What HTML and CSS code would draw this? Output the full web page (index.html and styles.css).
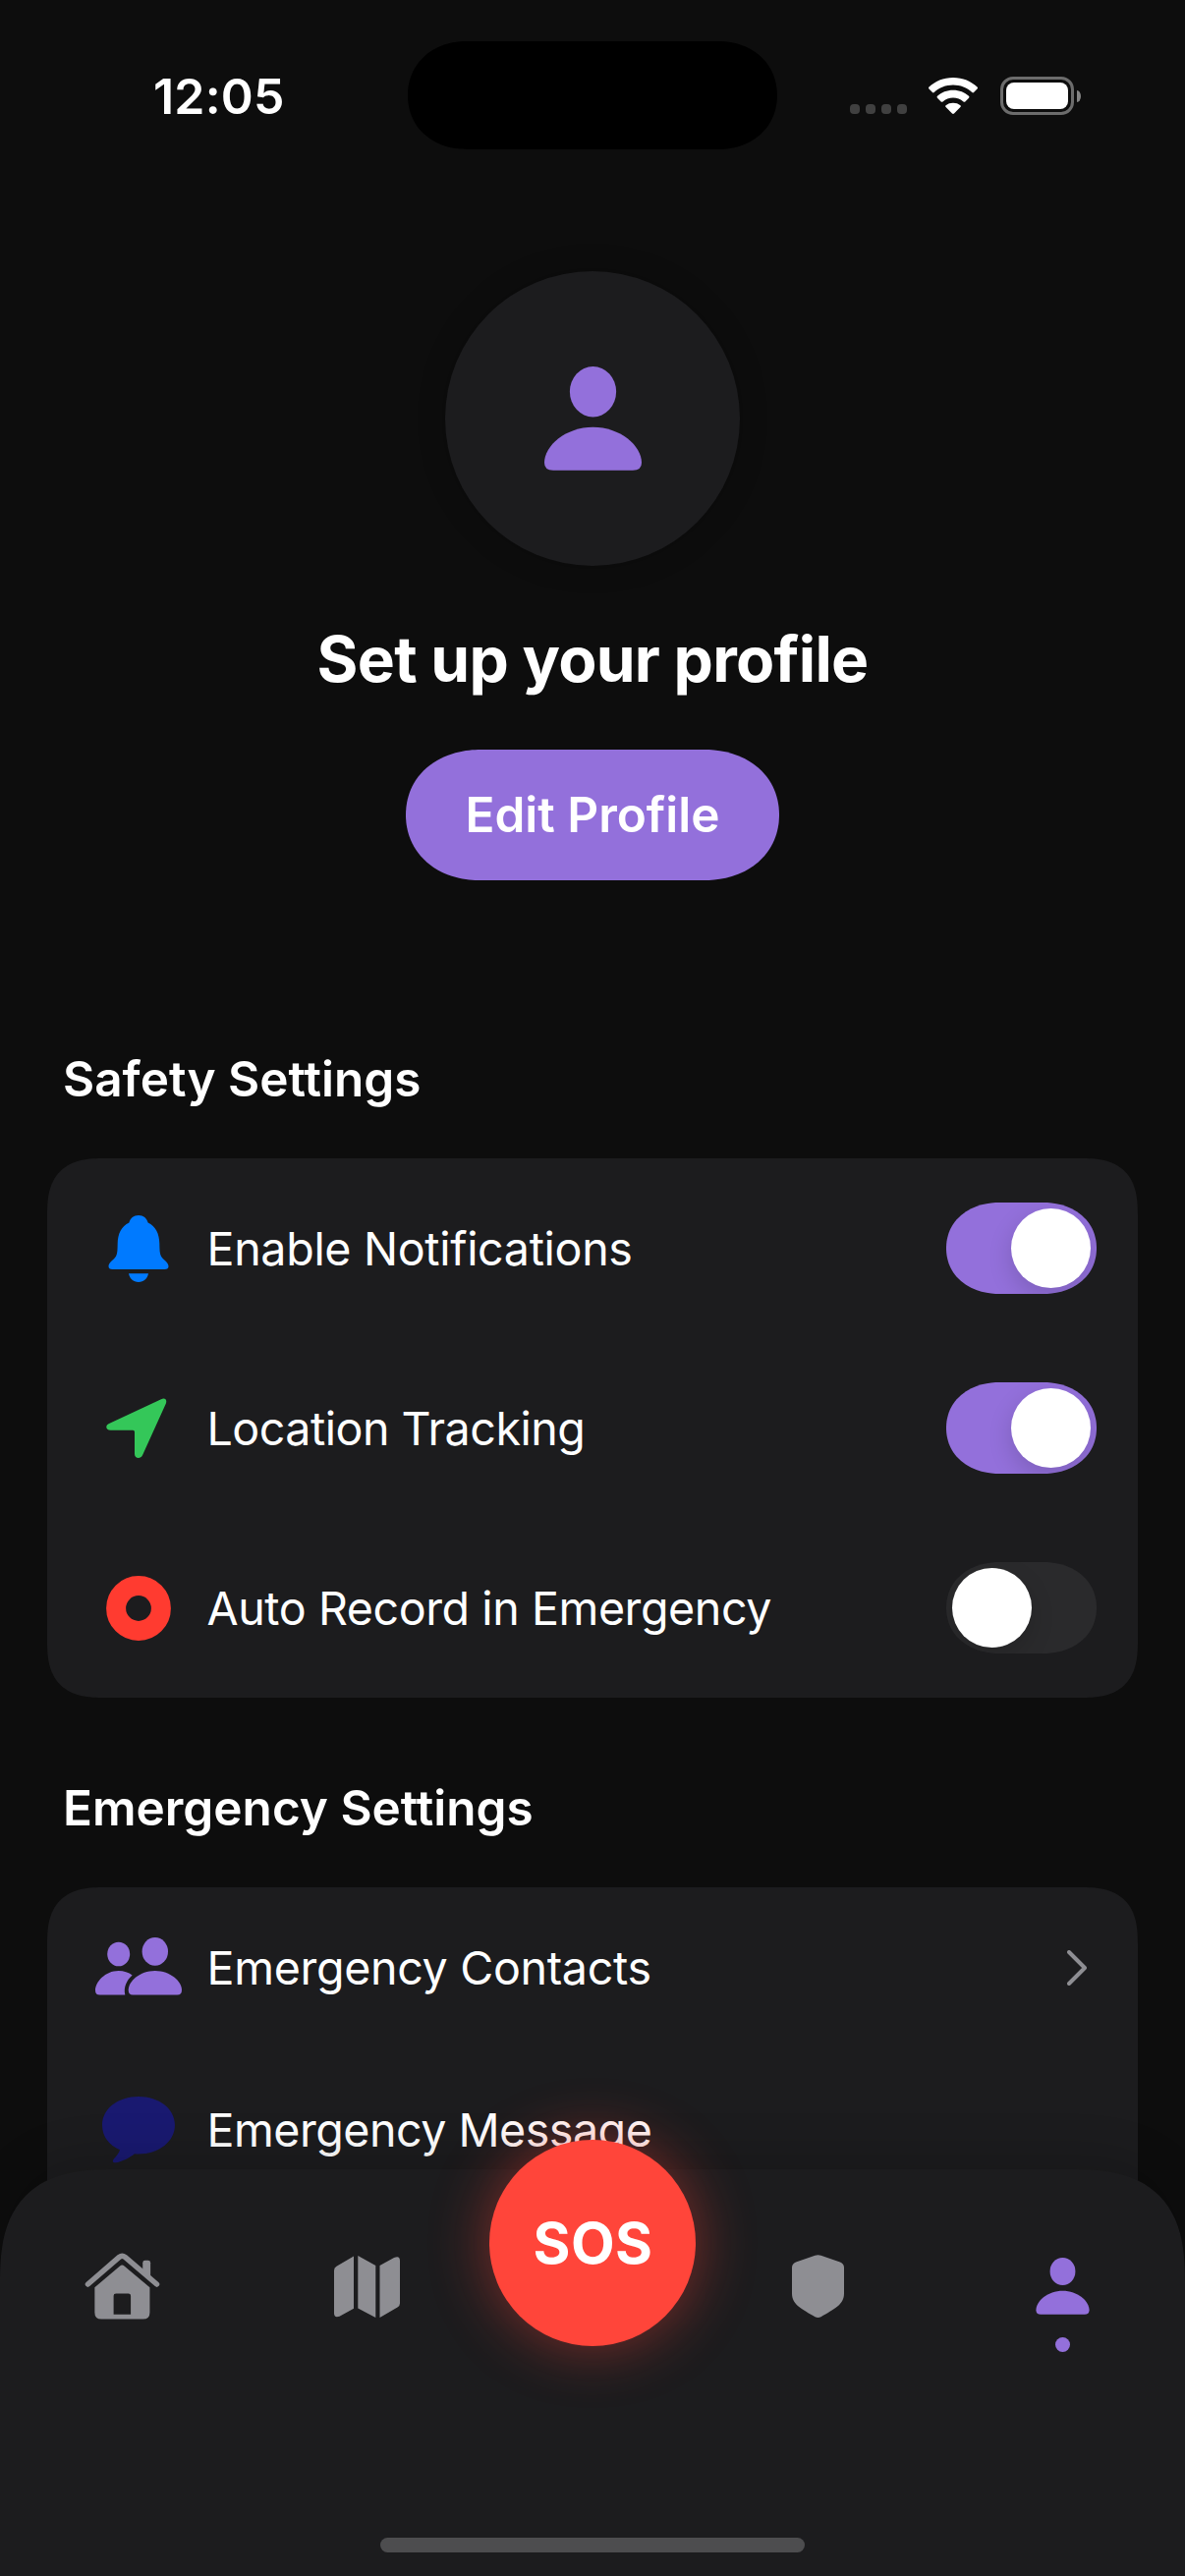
FILE: index.html
```html
<!DOCTYPE html>
<html lang="en">
<head>
<meta charset="utf-8">
<title>Profile</title>
<link rel="stylesheet" href="styles.css">
</head>
<body>
<div class="screen">
  <header class="status">
    <div class="time">12:05</div>
    <div class="island"></div>
    <div class="indicators">
      <div class="signal"><i></i><i></i><i></i><i></i></div>
      <svg class="wifi" width="50" height="37" viewBox="0 0 50 37"><path d="M25 0C34.8 0 43.600 3.800 49.500 9.600Q50.500 10.600 49.500 11.600L46 15.100Q45.200 15.900 44.300 15.100C39.200 10.300 32.400 7.600 25 7.600S10.800 10.300 5.700 15.100Q4.800 15.900 4 15.100L.5 11.600Q-.5 10.600.5 9.600C6.400 3.800 15.200 0 25 0Z"/><path d="M25 12.700C31.300 12.700 36.800 15 41 18.700Q42 19.700 41 20.700L37.300 24.400Q36.400 25.200 35.500 24.400C32.700 21.900 29 20.400 25 20.400S17.300 21.900 14.500 24.400Q13.600 25.200 12.700 24.400L9 20.700Q8 19.700 9 18.700C13.200 15 18.700 12.700 25 12.700Z"/><path d="M25 25.700C27.900 25.700 30.300 26.500 32.400 28.200Q33.300 29 32.400 30L26 36.600Q25 37.400 24 36.600L17.600 30Q16.700 29 17.600 28.200C19.700 26.500 22.100 25.700 25 25.700Z"/></svg>
      <div class="battery"><div class="shell"><div class="charge"></div></div><div class="cap"></div></div>
    </div>
  </header>

  <main>
    <section class="profile">
      <div class="avatar">
        <svg width="99" height="106" viewBox="0 0 99 106"><ellipse cx="49.500" cy="25.700" rx="23.600" ry="25.700"/><path d="M49.500 61.700C77 61.700 99 80.500 99 98Q99 105.700 90 105.700H9Q0 105.700 0 98C0 80.500 22 61.700 49.500 61.700Z"/></svg>
      </div>
      <h1>Set up your profile</h1>
      <button class="edit">Edit Profile</button>
    </section>

    <h2 class="safety">Safety Settings</h2>
    <div class="card">
      <div class="row tall">
        <div class="icon"><svg width="62" height="68" viewBox="0 0 62 68"><path fill="#007aff" d="M31 0C36 0 39.500 3 40.600 7.600C48.500 11.300 52.100 19 52.300 28.500C52.500 36 52.300 40.500 55.500 43.700C59 47 61.500 49 61.500 52Q61.500 55 57.500 55H4.500Q.5 55 .5 52C.5 49 3 47 6.500 43.700C9.700 40.500 9.500 36 9.700 28.500C9.900 19 13.500 11.300 21.400 7.600C22.500 3 26 0 31 0ZM21 59.300H41C40.200 64.500 36.300 68 31 68S21.800 64.500 21 59.300Z"/></svg></div>
        <span class="label">Enable Notifications</span>
        <div class="toggle on"><div class="knob"></div></div>
      </div>
      <div class="row tall">
        <div class="icon"><svg width="66" height="62" viewBox="0 0 66 62"><path fill="#34c759" d="M3 26L56 1.200C60-.6 62.300 1.800 60.800 5.800L37 58.200C35 62.500 29 61.500 29 57V34.500Q29 32.700 27.200 32.700H4.500C-.3 32.700-1.300 28 3 26Z"/></svg></div>
        <span class="label tighter">Location Tracking</span>
        <div class="toggle on"><div class="knob"></div></div>
      </div>
      <div class="row tall">
        <div class="icon"><svg width="66" height="66" viewBox="0 0 66 66"><circle cx="33" cy="33" r="22.900" fill="none" stroke="#ff3b30" stroke-width="20"/></svg></div>
        <span class="label tight">Auto Record in Emergency</span>
        <div class="toggle"><div class="knob"></div></div>
      </div>
    </div>

    <h2 class="emergency">Emergency Settings</h2>
    <div class="card last">
      <div class="row">
        <div class="icon raised"><svg width="88" height="59" viewBox="0 0 88 59"><g fill="#9370db"><ellipse cx="23.700" cy="17" rx="11.500" ry="12.300"/><ellipse cx="60.800" cy="14.400" rx="13.200" ry="14.400"/><path d="M60.800 34C76.500 34 88 45 88 53.500Q88 58.500 83.500 58.500H38Q33.700 58.500 33.700 53.500C33.700 45 45 34 60.800 34Z"/><path d="M23.700 34C29 34 34 35.700 37.600 38.500C32 43.500 28.500 50.500 30.300 58.500H4.500Q0 58.500 0 54C0 45.500 10 34 23.700 34Z"/></g></svg></div>
        <span class="label">Emergency Contacts</span>
        <svg class="chevron" width="20" height="36" viewBox="0 0 20 36"><path d="M2 2L18 18L2 34"/></svg>
      </div>
      <div class="row">
        <div class="icon message"><svg width="74" height="68" viewBox="0 0 74 68"><path fill="#191970" d="M37 0C58 0 74 12.500 74 29S58 58.500 37 58.500Q35 58.500 33 58.300C28 62 21.500 66 14 67.300C10.500 67.800 10 65.500 12 63.300C14.500 60.700 17 57.500 18 54.300C7 49.500 0 41 0 29C0 12.500 16 0 37 0Z"/></svg></div>
        <span class="label tighter">Emergency Message</span>
      </div>
    </div>
  </main>

  <nav class="tabs">
    <div class="tab"><svg width="77" height="68" viewBox="0 0 78 68"><path fill="none" stroke="#8e8e93" stroke-width="5.500" stroke-linecap="round" stroke-linejoin="round" d="M3.500 32L35.800 4Q38.800 1.600 41.800 4L74.500 32"/><path d="M60 21V10Q60 7.500 62.500 7.500H65.500Q68 7.500 68 10V28Z"/><path fill-rule="evenodd" d="M36.500 13.300Q38.800 11.300 41 13.300L67.300 35.300V61Q67.300 68 60.300 68H17.500Q10.500 68 10.500 61V35.300ZM32.500 41.500Q30 41.500 30 44V63H47.700V44Q47.700 41.500 45.200 41.500Z"/></svg></div>
    <div class="tab"><svg width="67" height="63" viewBox="0 0 67 63"><path d="M20 .5V53.800L5.500 61.700Q0 63.500 0 58.500V15Q0 12.300 2.500 10.800ZM24.300 0L42.300 10V63L24.300 53.500ZM46.500 10L61 2Q67-.5 67 5V48.500Q67 51.200 64.500 52.500L46.500 63Z"/></svg></div>
    <button class="sos">SOS</button>
    <div class="tab"><svg width="53" height="64" viewBox="0 0 53 64"><path d="M23.500.8Q26.500-.5 29.500.8L49 7.600Q53 9.200 53 13V39.500C53 51 42.500 55.500 29.500 63.200Q26.500 64.800 23.500 63.200C10.500 55.500 0 51 0 39.500V13Q0 9.200 4 7.600Z"/></svg></div>
    <div class="tab active"><svg width="55" height="58" viewBox="0 0 99 106"><ellipse cx="49.500" cy="25.700" rx="23.600" ry="25.700"/><path d="M49.500 61.700C77 61.700 99 80.500 99 98Q99 105.700 90 105.700H9Q0 105.700 0 98C0 80.500 22 61.700 49.500 61.700Z"/></svg><div class="dot"></div></div>
    <div class="home-bar"></div>
  </nav>
</div>
</body>
</html>
```
FILE: styles.css
```css
* { box-sizing: border-box; }
body { margin: 0; background: #0d0d0d; font-family: Inter, "Liberation Sans", sans-serif; color: #fff; }
.screen { position: relative; width: 1206px; height: 2622px; overflow: hidden; background: #0d0d0d; }
svg { display: block; }
button { border: 0; padding: 0; font-family: inherit; color: inherit; }

.status { display: grid; grid-template-columns: 415px 376px 1fr; height: 276px; padding-top: 42px; align-items: start; }
.time { padding-left: 156px; margin-top: 1px; font-size: 50px; font-weight: 600; line-height: 110px; letter-spacing: .2px; }
.island { height: 110px; background: #000; border-radius: 58px / 55px; }
.indicators { display: flex; height: 110px; padding-left: 74px; align-items: flex-start; }
.signal { display: flex; gap: 6px; margin-top: 64px; width: 80px; }
.signal i { width: 10px; height: 10px; border-radius: 4px; background: #404040; }
.wifi { margin-top: 37px; fill: #fff; }
.battery { display: flex; align-items: center; gap: 3px; margin: 36px 0 0 23px; }
.shell { width: 75px; height: 39px; padding: 3px; border: 3px solid #6c6c6c; border-radius: 13px; }
.charge { height: 27px; border-radius: 8px; background: #fff; }
.cap { width: 4px; height: 12px; border-radius: 0 4px 4px 0 / 0 6px 6px 0; background: #848484; }

.profile { display: flex; flex-direction: column; align-items: center; }
.avatar { display: flex; width: 300px; height: 300px; padding-top: 97px; justify-content: center; border-radius: 50%; background: #1c1c1e; fill: #9370db; box-shadow: 0 0 30px rgba(0, 0, 0, .2); }
h1 { margin: 55px 0 52px; font-size: 64px; line-height: 80px; font-weight: 700; letter-spacing: -.72px; white-space: nowrap; }
.edit { width: 380px; height: 133px; padding-bottom: 1px; border-radius: 70px / 66.5px; background: #9370db; font-size: 49.5px; font-weight: 600; }
h2 { margin: 0; padding-left: 64px; font-size: 49.5px; line-height: 60px; font-weight: 600; white-space: nowrap; }
.safety { margin-top: 172px; }
.emergency { margin-top: 82px; }
.card { margin: 51px 48px 0; border-radius: 48px; background: #1c1c1e; }
.last { height: 700px; }
.row { display: flex; height: 165px; padding: 0 42px 0 48px; align-items: center; }
.tall { height: 183px; }
.icon { display: flex; width: 90px; margin-right: 24.5px; justify-content: center; }
.raised { margin-bottom: 5px; }
.message { margin-bottom: 1px; padding-right: 1px; }
.label { flex: 1; font-size: 46.6px; line-height: 60px; letter-spacing: -.33px; white-space: nowrap; }
.last .label { margin-bottom: 2px; }
.tight { letter-spacing: -.43px; }
.tighter { letter-spacing: -.5px; }
.toggle { width: 153px; height: 93px; padding: 6px; border-radius: 50px / 46.5px; background: #2a2a2c; overflow: hidden; }
.knob { width: 81px; height: 81px; border-radius: 50%; background: #fff; box-shadow: 0 9px 24px rgba(0, 0, 0, .15); }
.on { background: #9370db; }
.on .knob { margin-left: 60px; }
.chevron { margin: 0 10px 1px 0; fill: none; stroke: #8e8e93; stroke-width: 4; stroke-linecap: round; stroke-linejoin: round; }

.tabs { position: absolute; left: 0; right: 0; bottom: 0; display: flex; height: 414px; border-radius: 94px 94px 0 0; background: #1c1c1e; fill: #8e8e93; box-shadow: 0 -15px 45px rgba(0, 0, 0, .15); }
.tab { display: flex; flex: 1; height: 238px; flex-direction: column; align-items: center; justify-content: center; }
.sos { width: 210px; height: 210px; margin-top: -30px; padding: 0 0 1px 1px; border-radius: 50%; background: #ff453a; font-size: 58px; font-weight: 700; letter-spacing: .5px; box-shadow: 0 0 60px rgba(255, 69, 58, .45); }
.active { fill: #9370db; padding-top: 38px; }
.dot { width: 15px; height: 15px; margin-top: 23px; border-radius: 50%; background: #9370db; }
.home-bar { position: absolute; left: 387px; bottom: 24px; width: 432px; height: 15px; border-radius: 8px; background: #4d4d4f; }

/* Continuous-curvature corners where the browser can draw them */
@supports (corner-shape: superellipse(1.2)) {
  .island { border-radius: 60px / 55px; corner-shape: superellipse(1.08); }
  .edit { border-radius: 76px / 66.5px; corner-shape: superellipse(1.08); }
  .toggle { border-radius: 54px / 46.5px; corner-shape: superellipse(1.08); }
  .card { border-radius: 58px; corner-shape: superellipse(1.42); }
  .tabs { border-radius: 115px 115px 0 0; corner-shape: superellipse(1.4); }
}
```
